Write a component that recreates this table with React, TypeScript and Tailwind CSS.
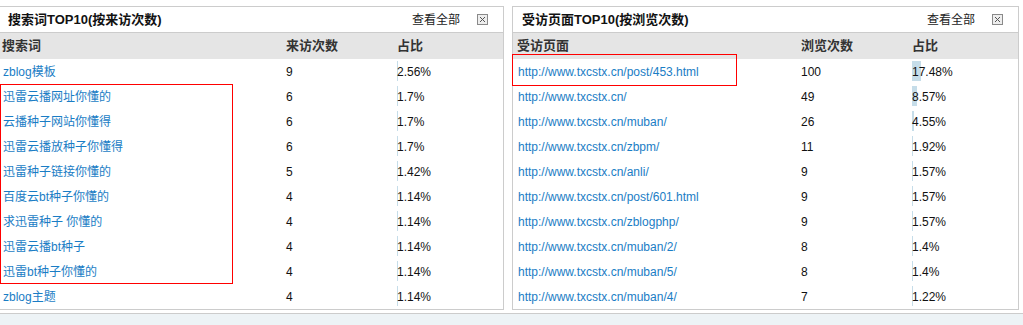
import React from "react";

type Row = { name: string; count: string; pct: number };

const left: Row[] = [
  { name: "zblog模板", count: "9", pct: 2.56 },
  { name: "迅雷云播网址你懂的", count: "6", pct: 1.7 },
  { name: "云播种子网站你懂得", count: "6", pct: 1.7 },
  { name: "迅雷云播放种子你懂得", count: "6", pct: 1.7 },
  { name: "迅雷种子链接你懂的", count: "5", pct: 1.42 },
  { name: "百度云bt种子你懂的", count: "4", pct: 1.14 },
  { name: "求迅雷种子 你懂的", count: "4", pct: 1.14 },
  { name: "迅雷云播bt种子", count: "4", pct: 1.14 },
  { name: "迅雷bt种子你懂的", count: "4", pct: 1.14 },
  { name: "zblog主题", count: "4", pct: 1.14 },
];

const right: Row[] = [
  { name: "http://www.txcstx.cn/post/453.html", count: "100", pct: 17.48 },
  { name: "http://www.txcstx.cn/", count: "49", pct: 8.57 },
  { name: "http://www.txcstx.cn/muban/", count: "26", pct: 4.55 },
  { name: "http://www.txcstx.cn/zbpm/", count: "11", pct: 1.92 },
  { name: "http://www.txcstx.cn/anli/", count: "9", pct: 1.57 },
  { name: "http://www.txcstx.cn/post/601.html", count: "9", pct: 1.57 },
  { name: "http://www.txcstx.cn/zblogphp/", count: "9", pct: 1.57 },
  { name: "http://www.txcstx.cn/muban/2/", count: "8", pct: 1.4 },
  { name: "http://www.txcstx.cn/muban/5/", count: "8", pct: 1.4 },
  { name: "http://www.txcstx.cn/muban/4/", count: "7", pct: 1.22 },
];

function CloseBox() {
  return (
    <svg width="11" height="11" viewBox="0 0 11 11" className="block">
      <rect x="0.5" y="0.5" width="10" height="10" fill="#eeeeee" stroke="#8a8a8a" />
      <path d="M3 3 L8 8 M8 3 L3 8" stroke="#555" strokeWidth="1" />
    </svg>
  );
}

function Panel({
  title,
  cols,
  rows,
  className,
  padTitle,
}: {
  title: string;
  cols: [string, string, string];
  rows: Row[];
  className: string;
  padTitle: string;
}) {
  return (
    <div className={"border border-[#cccccc] bg-white " + className}>
      <div className={"flex h-[26px] items-center border-b border-[#cccccc] " + padTitle}>
        <div className="text-[13px] font-bold text-[#111]">{title}</div>
        <div className="ml-auto flex items-center">
          <span className="text-[12px] text-[#222]">查看全部</span>
          <span className="ml-[17px] mr-[15px]">
            <CloseBox />
          </span>
        </div>
      </div>
      <div className="grid h-[26px] grid-cols-[288px_111px_1fr] items-center bg-[#e5e5e5] pl-[4px] text-[13px] font-bold text-[#333]">
        <div>{cols[0]}</div>
        <div className="-ml-[4px]">{cols[1]}</div>
        <div className="-ml-[4px]">{cols[2]}</div>
      </div>
      {rows.map((r, i) => (
        <div
          key={i}
          className="grid h-[25px] grid-cols-[288px_111px_1fr] items-center text-[12px]"
        >
          <div className="pl-[5px] text-[#1a7dc5]">{r.name}</div>
          <div className="text-[#111]">{r.count}</div>
          <div className="relative flex h-[25px] items-center">
            <div
              className="absolute left-0 top-[2px] h-[20px] bg-[#c6dde9]"
              style={{ width: Math.max(1, Math.round(r.pct * 0.54)) + "px" }}
            />
            <span className="relative text-[#111]">{r.pct}%</span>
          </div>
        </div>
      ))}
    </div>
  );
}

export default function App() {
  return (
    <div
      className="relative h-[325px] w-[1023px] overflow-hidden bg-white"
      style={{ fontFamily: '"Liberation Sans", Arial, "Noto Sans CJK SC", sans-serif' }}
    >
      <div className="flex gap-[8px] pt-[6px]">
        <Panel
          className="-ml-[3px] w-[507px]"
          padTitle="pl-[10px]"
          title="搜索词TOP10(按来访次数)"
          cols={["搜索词", "来访次数", "占比"]}
          rows={left}
        />
        <Panel
          className="w-[507px]"
          padTitle="pl-[9px]"
          title="受访页面TOP10(按浏览次数)"
          cols={["受访页面", "浏览次数", "占比"]}
          rows={right}
        />
      </div>
      <div className="mt-[3px] h-[20px] border-t border-[#cccccc] bg-[#edf3f6]" />
      <div className="pointer-events-none absolute left-0 top-[84px] h-[200px] w-[233px] border border-[#ff0000]" />
      <div className="pointer-events-none absolute left-[512px] top-[54px] h-[32px] w-[225px] border border-[#ff0000]" />
    </div>
  );
}
